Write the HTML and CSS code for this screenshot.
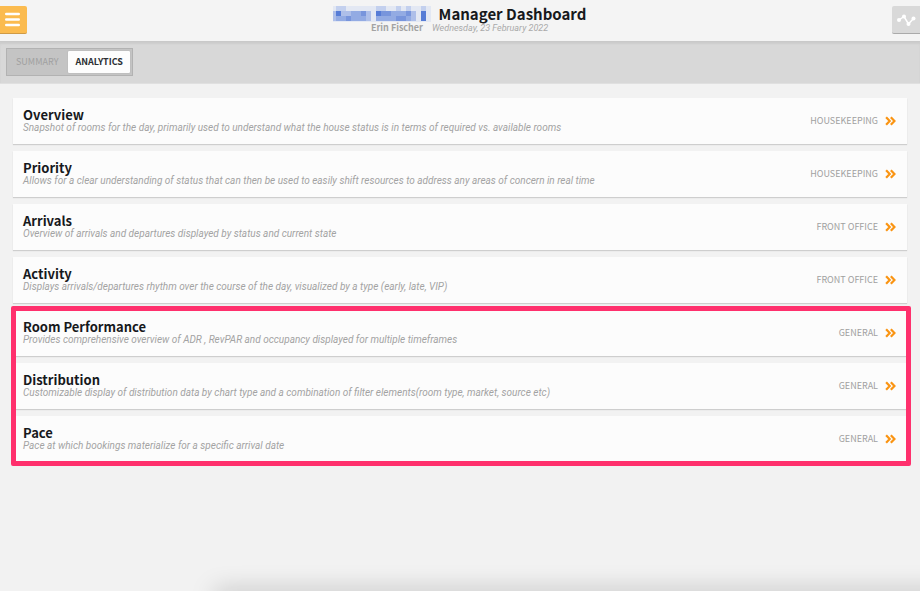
FILE: index.html
```html
<!DOCTYPE html>
<html lang="en">
<head>
<meta charset="utf-8">
<title>Manager Dashboard</title>
<link rel="stylesheet" href="styles.css">
</head>
<body>
<header class="topbar">
  <button class="menu" type="button" aria-label="Menu"><svg width="15" height="15" viewBox="0 0 15 15"><path d="M1.3 2h12.4M1.3 7.500h12.4M1.3 13h12.4" stroke="#fff" stroke-width="2.600" stroke-linecap="round"/></svg></button>
  <div class="heading">
    <div class="title-row">
      <svg class="redacted" width="98" height="16" viewBox="0 0 98 16" shape-rendering="crispEdges" aria-hidden="true">
        <path d="M0 0h98v16H0z" fill="#e3e8f3"/>
        <path d="M3 0h10v5H3zM43 0h10v5H43zM63 0h5v5H63zM73 0h5v5H73zM88 0h5v5H88z" fill="#c3d0ee"/>
        <path d="M3 5h30v10H3zM43 5h35v10H43z" fill="#93abe3"/>
        <path d="M8 5h10v5H8zM33 5h5v10H33zM78 5h5v10H78zM0 5h3v10H0z" fill="#aebfe9"/>
        <path d="M3 5h5v5H3zM43 5h5v5H43zM88 5h5v10H88z" fill="#567cd6"/>
        <path d="M13 10h5v5H13zM28 5h5v5H28zM48 5h10v5H48zM63 10h10v5H63zM73 5h5v5H73z" fill="#7895dc"/>
      </svg>
      <h1>Manager Dashboard</h1>
    </div>
    <p class="meta"><span class="user">Erin Fischer</span><time class="date" datetime="2022-02-23">Wednesday, 23 February 2022</time></p>
  </div>
  <button class="chart" type="button" aria-label="Charts"><svg width="20" height="14" viewBox="0 0 20 14"><path d="M3 7l5-3.500 4.500 7.500 5-5.500" fill="none" stroke="#fff" stroke-width="1.500"/><g fill="#fff"><circle cx="3" cy="7" r="2"/><circle cx="8" cy="3.500" r="2"/><circle cx="12.500" cy="11" r="2"/><circle cx="17.500" cy="5.500" r="2"/></g></svg></button>
</header>
<nav class="toolbar">
  <div class="tabs">
    <button class="tab" type="button">SUMMARY</button>
    <button class="tab active" type="button">ANALYTICS</button>
  </div>
</nav>
<main class="list">
  <a class="card" href="#overview"><div class="info"><h2>Overview</h2><p>Snapshot of rooms for the day, primarily used to understand what the house status is in terms of required vs. available rooms</p></div><span class="dept">HOUSEKEEPING</span><svg class="go" viewBox="0 0 10 9"><path d="M1 1l3.300 3.500L1 8M5.300 1l3.300 3.500L5.300 8"/></svg></a>
  <a class="card" href="#priority"><div class="info"><h2>Priority</h2><p>Allows for a clear understanding of status that can then be used to easily shift resources to address any areas of concern in real time</p></div><span class="dept">HOUSEKEEPING</span><svg class="go" viewBox="0 0 10 9"><path d="M1 1l3.300 3.500L1 8M5.300 1l3.300 3.500L5.300 8"/></svg></a>
  <a class="card" href="#arrivals"><div class="info"><h2>Arrivals</h2><p>Overview of arrivals and departures displayed by status and current state</p></div><span class="dept">FRONT OFFICE</span><svg class="go" viewBox="0 0 10 9"><path d="M1 1l3.300 3.500L1 8M5.300 1l3.300 3.500L5.300 8"/></svg></a>
  <a class="card" href="#activity"><div class="info"><h2>Activity</h2><p>Displays arrivals/departures rhythm over the course of the day, visualized by a type (early, late, VIP)</p></div><span class="dept">FRONT OFFICE</span><svg class="go" viewBox="0 0 10 9"><path d="M1 1l3.300 3.500L1 8M5.300 1l3.300 3.500L5.300 8"/></svg></a>
  <section class="highlight">
    <a class="card" href="#performance"><div class="info"><h2>Room Performance</h2><p>Provides comprehensive overview of ADR , RevPAR and occupancy displayed for multiple timeframes</p></div><span class="dept">GENERAL</span><svg class="go" viewBox="0 0 10 9"><path d="M1 1l3.300 3.500L1 8M5.300 1l3.300 3.500L5.300 8"/></svg></a>
    <a class="card" href="#distribution"><div class="info"><h2>Distribution</h2><p>Customizable display of distribution data by chart type and a combination of filter elements(room type, market, source etc)</p></div><span class="dept">GENERAL</span><svg class="go" viewBox="0 0 10 9"><path d="M1 1l3.300 3.500L1 8M5.300 1l3.300 3.500L5.300 8"/></svg></a>
    <a class="card" href="#pace"><div class="info"><h2>Pace</h2><p>Pace at which bookings materialize for a specific arrival date</p></div><span class="dept">GENERAL</span><svg class="go" viewBox="0 0 10 9"><path d="M1 1l3.300 3.500L1 8M5.300 1l3.300 3.500L5.300 8"/></svg></a>
  </section>
</main>
<div class="bottom-shadow"></div>
</body>
</html>
```
FILE: styles.css
```css
* { box-sizing: border-box; }
body {
  margin: 0;
  min-height: 100vh;
  overflow: hidden;
  background: #f2f2f2;
  color: #17191c;
  font-family: "Noto Sans CJK SC", "Noto Sans", sans-serif;
}
h1, h2, p { margin: 0; }
button { border: 0; padding: 0; font: inherit; }
.topbar {
  display: flex;
  justify-content: space-between;
  align-items: flex-start;
  height: 42px;
  padding-top: 6px;
  background: #f4f4f4;
  border-bottom: 1px solid #c9c9c9;
}
.menu, .chart {
  display: flex;
  align-items: center;
  justify-content: center;
  width: 28px;
  height: 28px;
}
.menu {
  width: 27px;
  background: #fbbb4f;
  border-bottom: 1px solid #cf9a45;
  border-radius: 0 2px 2px 0;
  padding-right: 2px;
}
.chart {
  background: #d9d9d9;
  border-bottom: 1px solid #aaa;
  border-radius: 2px 0 0 2px;
}
.heading { display: flex; flex-direction: column; align-items: center; }
.title-row { display: flex; gap: 8px; height: 16px; align-items: center; }
h1 { font-size: 15px; line-height: 16px; font-weight: 700; }
.meta { display: flex; gap: 9px; font-size: 9px; line-height: 12px; color: #aaa; }
.user { font-weight: 700; color: #a3a3a3; }
.date, .info p { font-family: Roboto, "Noto Sans", sans-serif; font-style: italic; }
.toolbar {
  display: flex;
  padding: 6px 6px 7px;
  background: #d8d8d8;
  border-bottom: 1px solid #e0e0e0;
  box-shadow: inset 0 2px 2px #cccccc;
}
.tabs {
  display: flex;
  padding: 2px;
  background: #c4c4c4;
  border: 1px solid #b2b2b2;
}
.tab {
  height: 22px;
  padding: 0 7px;
  background: transparent;
  color: #a0a0a0;
  font-size: 9px;
  line-height: 22px;
}
.tab:first-child { padding-right: 10px; }
.tab.active {
  background: #fdfdfd;
  color: #2b2f33;
  font-weight: 700;
  border-radius: 1px;
  box-shadow: 0 0 1px #999;
}
.list { display: flex; flex-direction: column; gap: 7px; padding: 14px 13px; }
.highlight { position: relative; display: flex; flex-direction: column; gap: 7px; }
.highlight::after {
  content: "";
  position: absolute;
  inset: -4px -4px -4px -2px;
  border: 5px solid #ff306d;
  border-radius: 2px;
  pointer-events: none;
}
.card {
  display: flex;
  align-items: center;
  height: 46px;
  padding: 0 11px 0 10px;
  background: #fcfcfc;
  box-shadow: 0 1px 1px #cecece;
  color: inherit;
  text-decoration: none;
}
.info { flex: 1; }
h2 { font-size: 13px; line-height: 14px; font-weight: 700; }
.info p { font-size: 10px; line-height: 12px; color: #a3a3a3; white-space: nowrap; }
.dept { font-size: 9px; line-height: 12px; color: #a0a0a0; }
.go { width: 11px; height: 10px; margin-left: 7px; fill: none; stroke: #fa9412; stroke-width: 2; }
.bottom-shadow {
  position: fixed;
  left: 215px;
  right: -40px;
  bottom: -12px;
  height: 12px;
  box-shadow: 0 0 24px rgba(0, 0, 0, .26);
}
```
